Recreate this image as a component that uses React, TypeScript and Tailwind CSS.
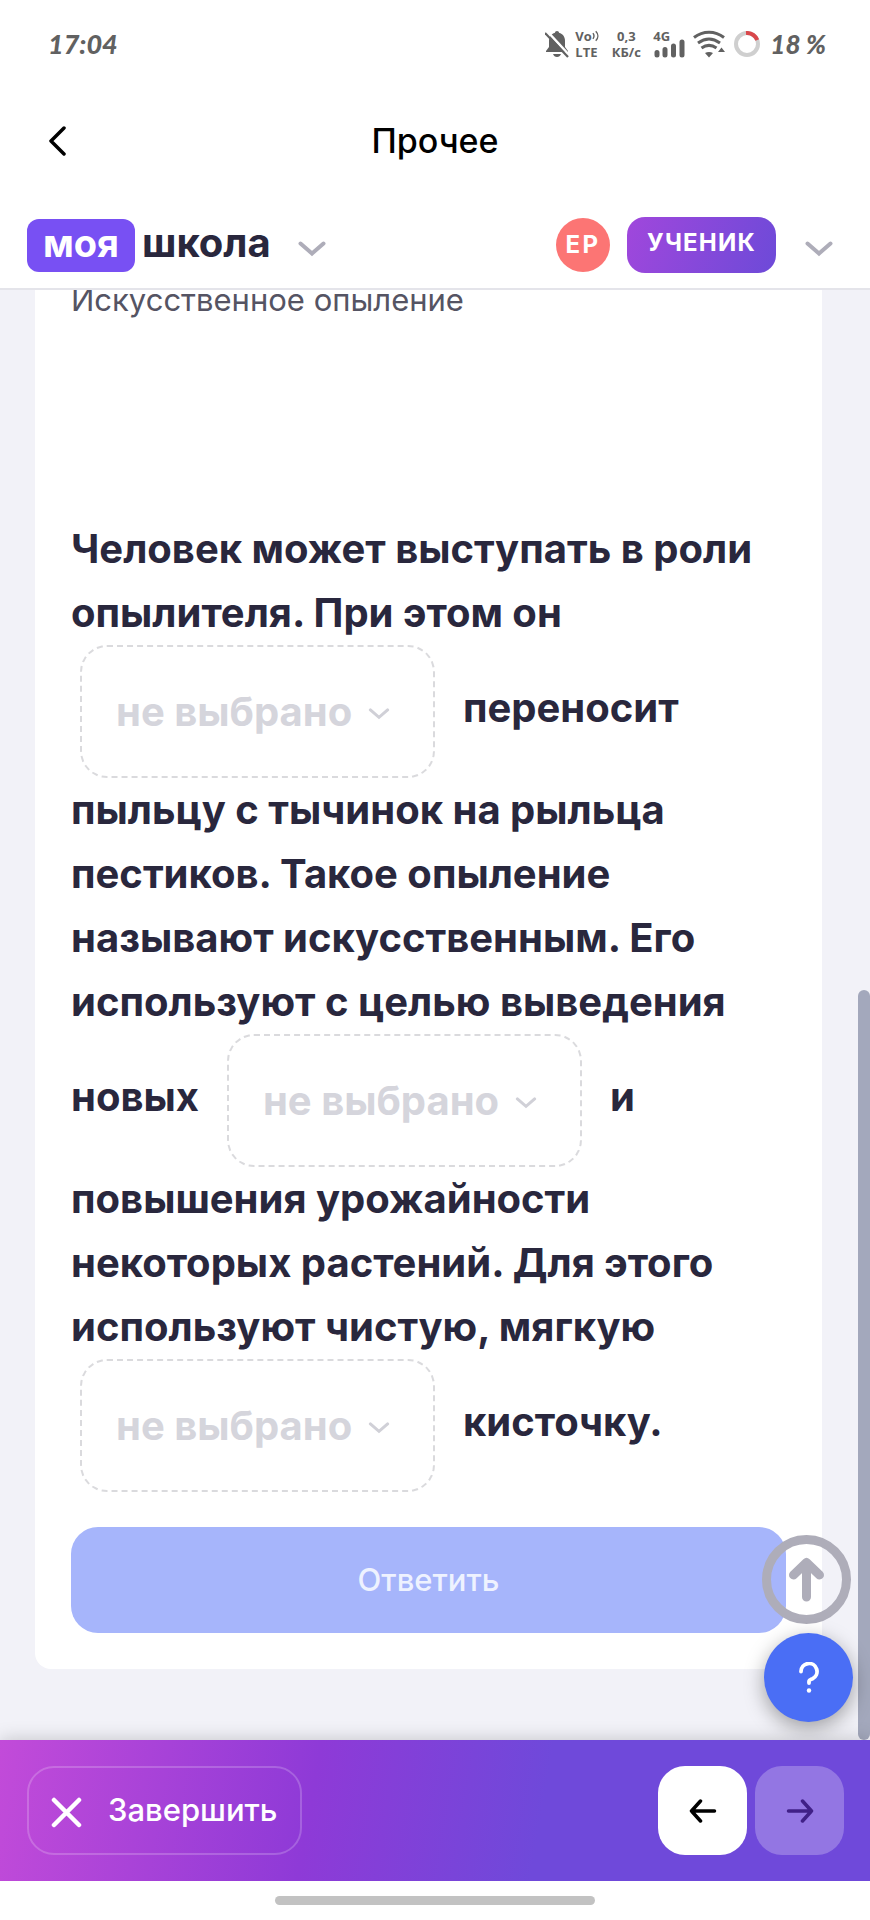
import { useState } from "react";

function Chevron({ className }: { className?: string }) {
  return (
    <svg viewBox="0 0 28 16" fill="none" stroke="currentColor" strokeWidth="4" strokeLinecap="round" className={className} aria-hidden="true">
      <path d="M2.5 2.5 14 12.5 25.5 2.5" />
    </svg>
  );
}

function StatusBar() {
  return (
    <div className="flex h-[88px] items-center justify-between pl-12 pr-11 text-[#616161]">
      <span className="font-['Lato'] text-[27px] font-black italic leading-8">17:04</span>
      <div className="flex items-center">
        <svg viewBox="0 0 24 28" className="mr-[6px] h-7 w-6" aria-hidden="true">
          <path d="M12 1c-1.200 0-2 .8-2 1.800C6 4 4 7 4 11v6l-3 4v1h22v-1l-3-4v-6c0-4-2-7-6-8.200C14 1.800 13.200 1 12 1Z" fill="currentColor" />
          <path d="M8 24h8c-.8 2-2 3-4 3s-3.200-1-4-3Z" fill="currentColor" />
          <path d="M2 1 25 26" stroke="#fff" strokeWidth="2.500" />
          <path d="M0 3 23 27" stroke="currentColor" strokeWidth="2.200" />
        </svg>
        <div className="mr-3 flex w-[24px] flex-col font-['Open_Sans'] text-[13px] font-bold leading-4">
          <span className="flex items-center">
            Vo
            <svg viewBox="0 0 8 12" className="h-3 w-2" fill="none" stroke="currentColor" strokeWidth="1.500" aria-hidden="true">
              <path d="M1 3c1.500 2 1.500 4 0 6M4 1c3 3 3 7 0 10" />
            </svg>
          </span>
          <span>LTE</span>
        </div>
        <div className="mr-3 flex w-[30px] flex-col items-center font-['Open_Sans'] text-[13px] font-bold leading-4">
          <span>0,3</span>
          <span>КБ/с</span>
        </div>
        <div className="relative mr-2 h-7 w-8">
          <span className="absolute left-0 top-0 font-['Open_Sans'] text-[13px] font-bold leading-3">4G</span>
          <svg viewBox="0 0 32 28" className="h-7 w-8" stroke="currentColor" strokeWidth="5" strokeLinecap="round" aria-hidden="true">
            <path d="M4 22.500v2.500M12 19.500v5.500M20.500 16v9M29 12v13" />
          </svg>
        </div>
        <svg viewBox="0 0 32 28" className="mr-[9px] h-7 w-8" fill="none" stroke="currentColor" strokeWidth="3" aria-hidden="true">
          <path d="M1 7.500C10 .5 22 .5 31 7.500M5 13c7-5 15-5 22 0M8.500 18c5-3.500 10-3.500 15 0" />
          <path d="M12 23c2.500-1.500 5.500-1.500 8 0l-4 4.500ZM25 22l3.500-4.500L32 22Z" fill="currentColor" stroke="none" />
        </svg>
        <svg viewBox="0 0 26 26" className="mr-[10px] size-[26px]" fill="none" strokeWidth="4" aria-hidden="true">
          <circle cx="13" cy="13" r="11" stroke="#cfcfcf" />
          <path d="M12 2c5-.3 9 2.200 11.300 7" stroke="#d9474b" />
        </svg>
        <span className="font-['Lato'] text-[26px] font-black italic leading-8">18 %</span>
      </div>
    </div>
  );
}

const OPTIONS = ["ветром", "насекомыми", "самостоятельно"];

function Blank({ label }: { label: string }) {
  const [value, setValue] = useState("");

  return (
    <span className="relative mx-[9px] inline-block h-[133px] w-[355px] align-middle">
      <select
        aria-label={label}
        value={value}
        onChange={(e) => setValue(e.target.value)}
        className="block h-full w-full appearance-none rounded-[27px] border-2 border-dashed border-[#dadadd] bg-white pl-[34px] pr-16 text-[40px] font-bold text-[#d5d5dc]"
      >
        <option value="">не выбрано</option>
        {OPTIONS.map((o) => (
          <option key={o}>{o}</option>
        ))}
      </select>
      <Chevron className="pointer-events-none absolute right-[45px] top-[63px] h-3 w-[22px] text-[#d0d0d7]" />
    </span>
  );
}

export default function App() {
  return (
    <div className="flex min-h-screen flex-col bg-white font-['Inter','Liberation_Sans',sans-serif] text-[#29273d]">
      <StatusBar />

      <div className="grid h-[106px] grid-cols-[1fr_auto_1fr] items-center px-12">
        <button aria-label="Назад" className="justify-self-start text-black">
          <svg viewBox="0 0 18 30" className="h-[30px] w-[18px]" fill="none" stroke="currentColor" strokeWidth="3.500" strokeLinecap="round" strokeLinejoin="round" aria-hidden="true">
            <path d="M16 2 3 15 16 28" />
          </svg>
        </button>
        <h1 className="text-[34px] font-medium leading-10 text-black">Прочее</h1>
      </div>

      <header className="flex h-24 items-center justify-between border-b-2 border-[#e4e4ea] px-[27px] pt-2">
        <button className="flex items-center text-[40px] font-bold">
          <span className="flex h-[53px] w-[108px] items-center justify-center rounded-xl bg-[#7850f3] pb-1 text-[38px] text-white">моя</span>
          <span className="ml-[7px] pb-1">школа</span>
          <Chevron className="ml-[27px] mt-2 h-4 w-7 text-[#aeadb9]" />
        </button>
        <button className="flex items-center text-[24px] font-bold text-white" aria-label="Меню профиля">
          <span className="flex size-[54px] items-center justify-center rounded-full bg-[#fc7574] tracking-widest">ЕР</span>
          <span className="ml-[17px] flex h-14 w-[149px] items-center justify-center rounded-[18px] bg-[linear-gradient(110deg,#a047dc,#6d4ad8)] pb-1 tracking-wider">УЧЕНИК</span>
          <Chevron className="ml-[29px] mr-[10px] mt-2 h-4 w-7 text-[#aeadb9]" />
        </button>
      </header>

      <main className="relative flex-1 overflow-hidden bg-[#f2f2f8] pb-[70px] pl-[35px] pr-12">
        <article className="rounded-b-2xl bg-white px-9 pb-9">
          <p className="text-[31px] leading-5 text-[#555463]">Искусственное опыление</p>
          <p className="mt-[207px] text-[40px] font-bold leading-[64px]">
            Человек может выступать в роли опылителя. При этом он{"\u00a0 "}
            <Blank label="Пропуск 1" />
            {"\u00a0 "}переносит пыльцу с тычинок на рыльца пестиков. Такое опыление называют
            искусственным. Его используют с целью выведения новых{"\u00a0 "}
            <Blank label="Пропуск 2" />
            {"\u00a0 "}и повышения урожайности некоторых растений. Для этого используют чистую,
            мягкую{"\u00a0 "}
            <Blank label="Пропуск 3" />
            {"\u00a0 "}кисточку.
          </p>
          <button className="mt-[35px] h-[106px] w-full rounded-[27px] bg-[#a6b5fb] text-[31px] font-medium text-[#eef2ff]">Ответить</button>
        </article>

        {/* scrollbar thumb */}
        <div className="absolute bottom-0 right-0 h-[750px] w-3 rounded-full bg-[#a3a8bc]" />

        <div className="absolute bottom-[18px] right-[17px] flex flex-col gap-[9px]">
          <button aria-label="Наверх" className="-ml-[2px]">
            <svg viewBox="0 0 89 89" className="size-[89px]" fill="none" stroke="#aeadb9" strokeWidth="9" strokeLinecap="round" strokeLinejoin="round" aria-hidden="true">
              <circle cx="44.500" cy="44.500" r="40" />
              <path d="M44.500 62V28M31.500 40l13-12.500 13 12.500" />
            </svg>
          </button>
          <button aria-label="Помощь" className="flex size-[89px] items-center justify-center rounded-full bg-[#4a6ef5] shadow-[0_6px_20px_rgba(0,0,0,0.35)]">
            <svg viewBox="0 0 20 31" className="h-[31px] w-5" fill="none" stroke="#fff" strokeWidth="3.800" strokeLinecap="round" strokeLinejoin="round" aria-hidden="true">
              <path d="M2 9.500a8 8 0 1 1 11.500 7.200c-2.300 1-3.500 1.300-3.500 2.800v1.500" />
              <circle cx="10" cy="28.500" r="2.200" fill="#fff" stroke="none" />
            </svg>
          </button>
        </div>
      </main>

      <footer className="z-10 flex h-[141px] items-center justify-between bg-[linear-gradient(100deg,#c24bd9_0%,#8e3ad7_36%,#6f49da_62%)] pl-[27px] pr-[26px] shadow-[0_0_18px_rgba(0,0,0,0.2)]">
        <button className="flex h-[89px] items-center rounded-[27px] border-2 border-white/20 px-[22px] text-[31px] font-medium text-white">
          <svg viewBox="0 0 31 31" className="mr-[26px] mt-1 size-[31px]" stroke="currentColor" strokeWidth="4.500" strokeLinecap="round" aria-hidden="true">
            <path d="M3 3 28 28M28 3 3 28" />
          </svg>
          Завершить
        </button>
        <div className="flex gap-2">
          <button aria-label="Предыдущее задание" className="flex size-[89px] items-center justify-center rounded-[27px] bg-white text-black">
            <svg viewBox="0 0 28 24" className="h-6 w-7" fill="none" stroke="currentColor" strokeWidth="3.500" strokeLinecap="round" strokeLinejoin="round" aria-hidden="true">
              <path d="M25.500 12H2.500M11.500 2 2.500 12l9 10" />
            </svg>
          </button>
          <button aria-label="Следующее задание" className="flex size-[89px] items-center justify-center rounded-[27px] bg-white/25 text-[#402087]">
            <svg viewBox="0 0 28 24" className="h-6 w-7" fill="none" stroke="currentColor" strokeWidth="3.500" strokeLinecap="round" strokeLinejoin="round" aria-hidden="true">
              <path d="M2.500 12h23M16.500 2l9 10-9 10" />
            </svg>
          </button>
        </div>
      </footer>

      <div className="z-20 flex h-[39px] items-center justify-center bg-white">
        <div className="h-[9px] w-80 rounded-full bg-[#c2c2c2]" />
      </div>
    </div>
  );
}
